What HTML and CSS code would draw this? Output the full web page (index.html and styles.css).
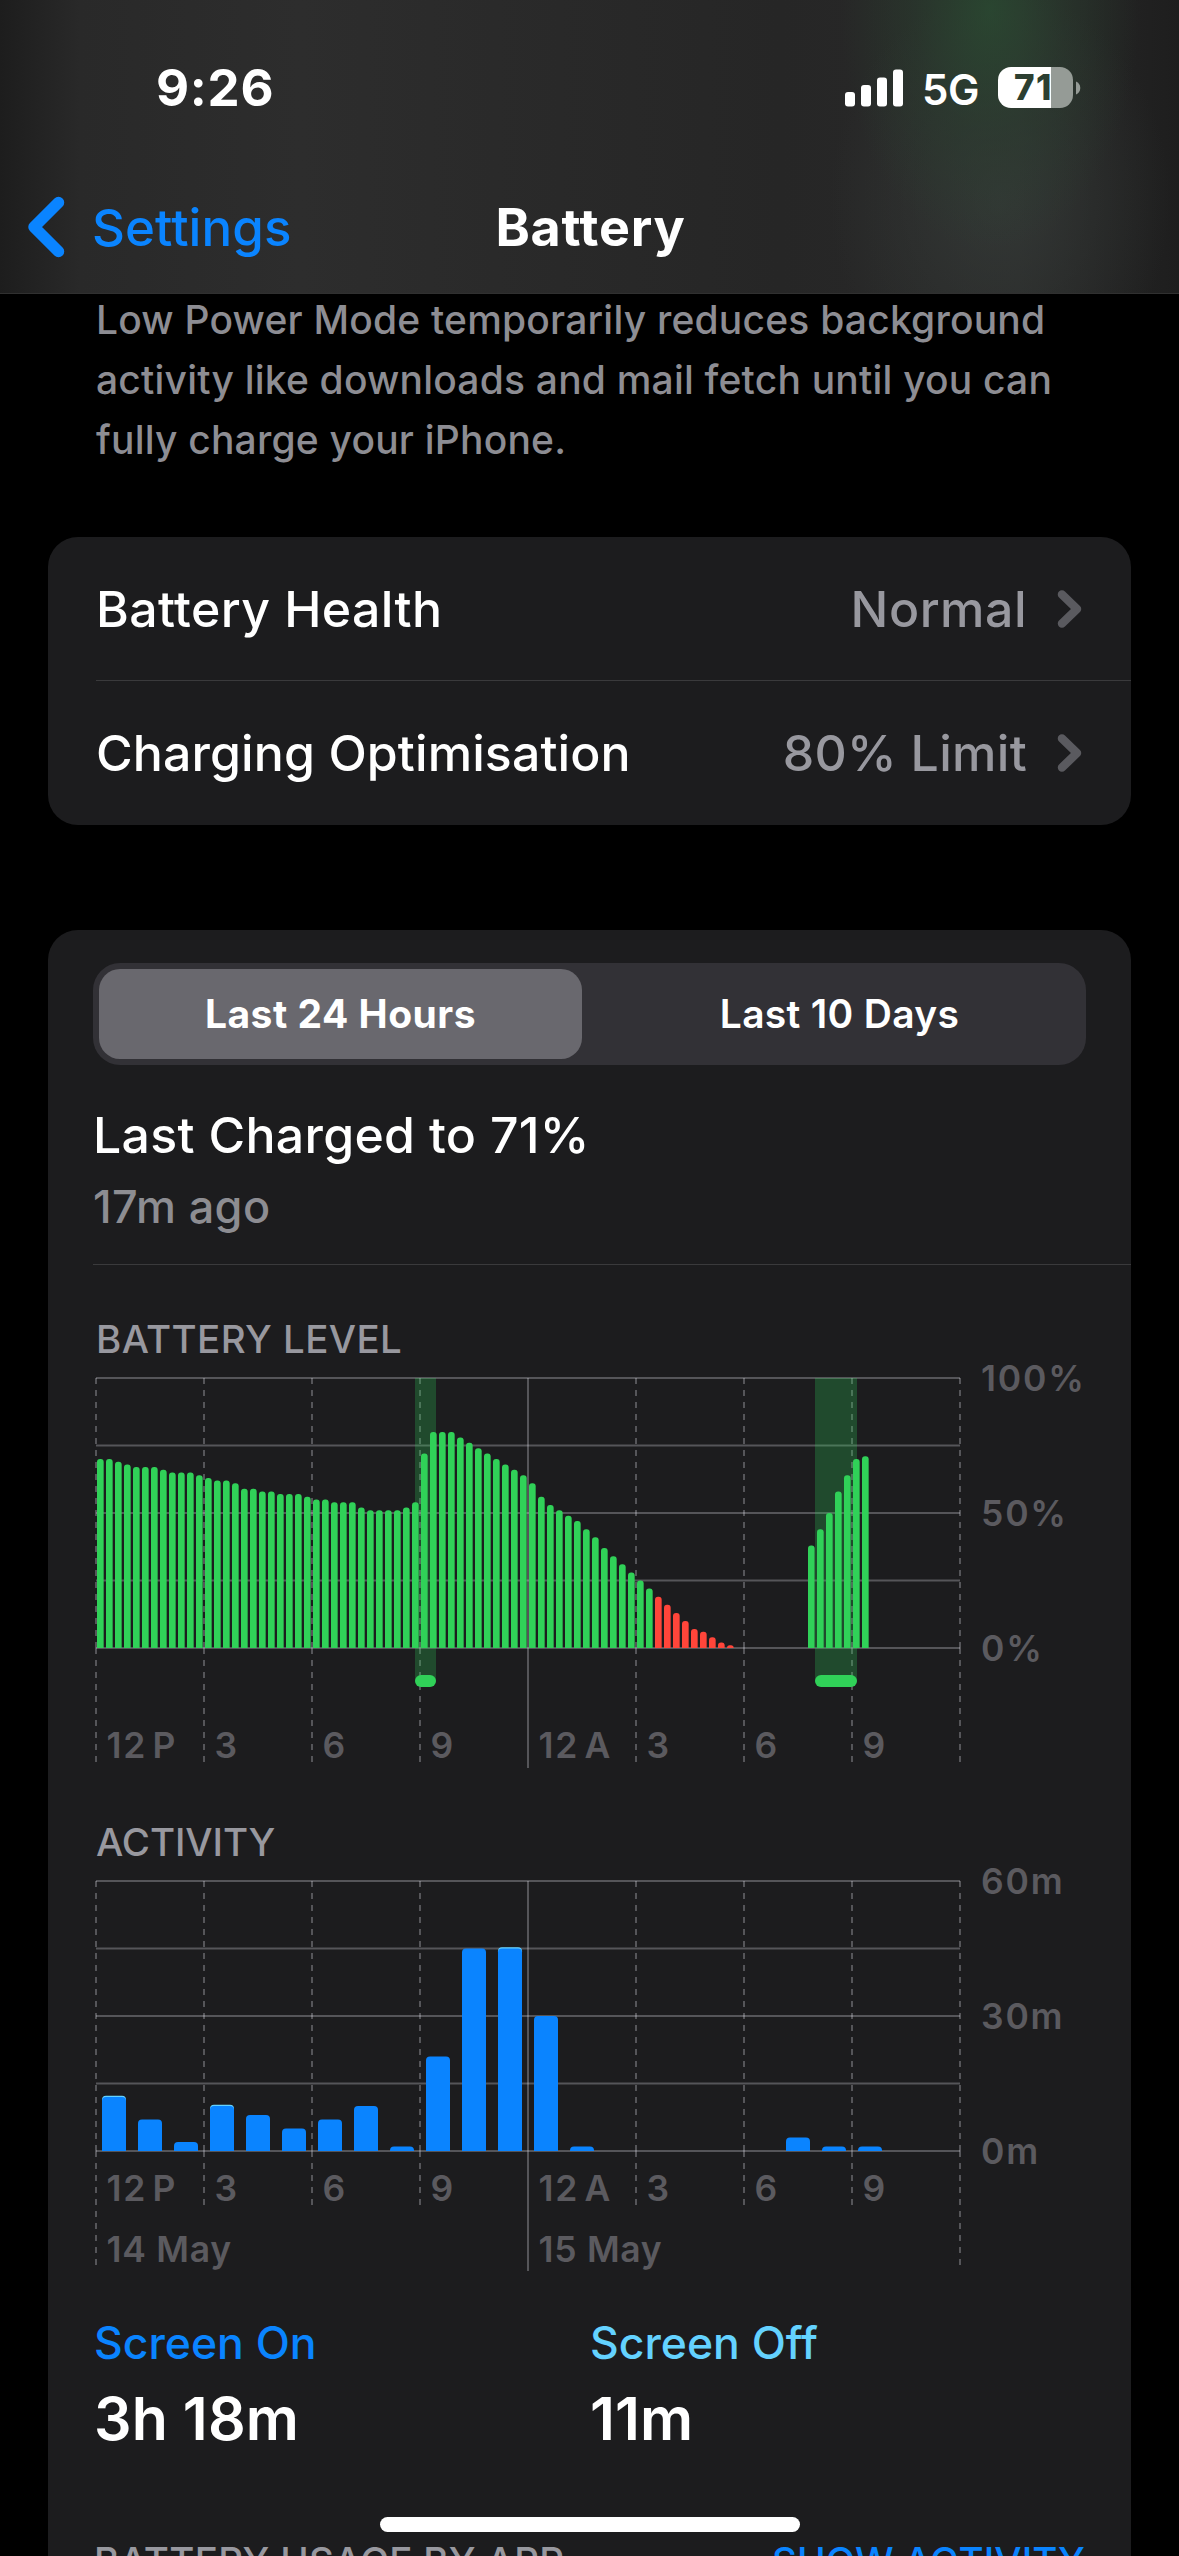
FILE: index.html
```html
<!DOCTYPE html>
<html lang="en">
<head>
  <meta charset="UTF-8" />
  <meta name="viewport" content="width=device-width, initial-scale=1" />
  <title>Battery</title>
  <link rel="stylesheet" href="styles.css">
</head>
<body>

  <header class="top">
    <div class="status-bar">
      <span class="time">9:26</span>
      <div class="status-icons">
        <svg class="signal" width="58" height="38" viewBox="0 0 58 38">
          <rect x="0" y="23" width="10" height="14.5" rx="3" />
          <rect x="16" y="16" width="10" height="21.5" rx="3" />
          <rect x="32" y="8.500" width="10" height="29" rx="3" />
          <rect x="48" y="0.500" width="10" height="37" rx="3" />
        </svg>
        <span class="network">5G</span>
        <div class="battery"><span>71</span></div>
        <svg class="nub" width="5" height="14" viewBox="0 0 5 14"><path d="M0 0.500C2.500 1.500 4.300 4 4.300 7S2.500 12.500 0 13.500Z" /></svg>
      </div>
    </div>
    <nav class="nav-bar">
      <a class="back">
        <svg width="38" height="62" viewBox="0 0 38 62"><path d="M30.500 6.500L6 31L30.500 55.500" /></svg>
        <span>Settings</span>
      </a>
      <h1>Battery</h1>
    </nav>
  </header>

  <main>
    <p class="note">Low Power Mode temporarily reduces background activity like downloads and mail fetch until you can fully charge your iPhone.</p>

    <section class="card list">
      <div class="row">
        <span class="health">Battery Health</span>
        <span class="value normal">Normal</span>
        <svg class="chevron" width="26" height="40" viewBox="0 0 26 40"><path d="M5 5.500L20 20L5 34.500" /></svg>
      </div>
      <div class="row">
        <span>Charging Optimisation</span>
        <span class="value">80% Limit</span>
        <svg class="chevron" width="26" height="40" viewBox="0 0 26 40"><path d="M5 5.500L20 20L5 34.500" /></svg>
      </div>
    </section>

    <section class="card usage">
      <div class="segmented">
        <span class="segment active">Last 24 Hours</span>
        <span class="segment">Last 10 Days</span>
      </div>

      <div class="summary">
        <h2>Last Charged to 71%</h2>
        <p>17m ago</p>
      </div>

      <h3 class="chart-title">BATTERY LEVEL</h3>
      <svg id="level" class="chart" width="1083" height="410" viewBox="0 0 1083 410"></svg>

      <h3 class="chart-title activity-title">ACTIVITY</h3>
      <svg id="activity" class="chart" width="1083" height="410" viewBox="0 0 1083 410"></svg>

      <div class="totals">
        <div class="total on">
          <h4>Screen On</h4>
          <p>3h 18m</p>
        </div>
        <div class="total off">
          <h4>Screen Off</h4>
          <p>11m</p>
        </div>
      </div>

      <div class="apps-head">
        <span>BATTERY USAGE BY APP</span>
        <a>SHOW ACTIVITY</a>
      </div>
    </section>
  </main>

  <div class="home-indicator"></div>

  <script>
    const LEFT = 48;
    const TOP = 14;
    const WIDTH = 864;
    const HEIGHT = 270;
    const BOTTOM = TOP + HEIGHT;
    const hours = ['12 P', '3', '6', '9', '12 A', '3', '6', '9'];

    // percent, one value every 15 minutes
    const levels = [
      70, 70, 69, 68, 67, 67, 67, 66, 65, 65, 65, 64,
      63, 62, 62, 61, 59, 59, 58, 58, 57, 57, 57, 56,
      55, 55, 54, 54, 54, 52, 51, 51, 51, 51, 52, 54,
      72, 80, 80, 80, 78, 76, 74, 72, 70, 68, 66, 64,
      61, 56, 53, 51, 49, 47, 44, 41, 37, 34, 31, 28,
      25, 22, 19, 16, 13, 10, 7, 6, 4, 2, 1, 0,
      0, 0, 0, 0, 0, 0, 0, 38, 44, 50, 58, 64, 70, 71
    ];
    const charging = [[367, 21], [767, 42]];

    // minutes per hour: [screen on, screen off]
    const minutes = [
      [12, 0.3], [7, 0], [2, 0], [10, 0.3], [8, 0], [5, 0], [7, 0], [10, 0],
      [1, 0], [21, 0], [45, 0], [45, 0.3], [30, 0], [1, 0], [0, 0], [0, 0],
      [0, 0], [0, 0], [0, 0], [3, 0], [1, 0], [1, 0]
    ];

    function line(x1, y1, x2, y2, cls) {
      return `<line x1="${x1}" y1="${y1}" x2="${x2}" y2="${y2}" class="${cls}" />`;
    }

    function text(x, y, str, cls) {
      return `<text x="${x}" y="${y}" class="${cls}">${str}</text>`;
    }

    // bar with only the top corners rounded
    function bar(x, y, w, r, cls) {
      r = Math.min(r, BOTTOM - y);
      return `<path class="${cls}" d="M${x} ${BOTTOM}V${y + r}Q${x} ${y} ${x + r} ${y}H${x + w - r}Q${x + w} ${y} ${x + w} ${y + r}V${BOTTOM}Z" />`;
    }

    function grid(ends, solidEnd) {
      let out = '';
      for (let i = 0; i <= 4; i++) {
        const y = TOP + i * HEIGHT / 4;
        out += line(LEFT, y, LEFT + WIDTH, y, 'grid');
      }
      for (let i = 0; i <= 8; i++) {
        const x = LEFT + i * WIDTH / 8;
        if (i === 4) {
          out += line(x, TOP, x, solidEnd, 'grid');
        } else {
          out += line(x, TOP, x, BOTTOM, 'grid dashed');
          out += line(x, BOTTOM, x, ends[i % 8 === 0 ? 0 : 1], 'grid dashed');
        }
      }
      return out;
    }

    function axis(labels, hourY) {
      let out = '';
      labels.forEach((l, i) => {
        out += text(933, TOP + i * HEIGHT / 2 + 12.7, l, 'axis');
      });
      hours.forEach((h, i) => {
        out += text(LEFT + i * WIDTH / 8 + 10.5, hourY, h, 'axis hour');
      });
      return out;
    }

    let level = grid([398, 398], 404);
    charging.forEach(c => {
      level += `<rect x="${c[0]}" y="${TOP}" width="${c[1]}" height="303" class="band" />`;
    });
    levels.forEach((v, i) => {
      if (v) level += bar(LEFT + 1 + i * 9, BOTTOM - v * HEIGHT / 100, 6.67, 3, v < 20 ? 'low' : 'ok');
    });
    charging.forEach(c => {
      level += `<rect x="${c[0]}" y="311" width="${c[1]}" height="12" rx="6" class="ok" />`;
    });
    level += axis(['100%', '50%', '0%'], 394);
    document.getElementById('level').innerHTML = level;

    let activity = grid([398, 338], 404);
    minutes.forEach((m, i) => {
      const x = LEFT + 6 + i * 36;
      const on = BOTTOM - m[0] * HEIGHT / 60;
      const all = on - m[1] * HEIGHT / 60;
      if (m[1]) activity += bar(x, all, 24, 4, 'screen-off');
      if (m[0]) activity += bar(x, on, 24, 4, 'screen-on');
    });
    activity += axis(['60m', '30m', '0m'], 334);
    activity += text(LEFT + 10.5, 395, '14 May', 'axis date');
    activity += text(LEFT + WIDTH / 2 + 10.5, 395, '15 May', 'axis date');
    document.getElementById('activity').innerHTML = activity;
  </script>
</body>
</html>
```
FILE: styles.css
```css
* {
  margin: 0;
  padding: 0;
  box-sizing: border-box;
}

body {
  height: 2556px;
  background: #000;
  color: #fff;
  overflow: hidden;
  position: relative;
  font-family: Inter, "Liberation Sans", sans-serif;
  font-size: 50px;
  font-weight: 500;
}

h1, h2, h3, h4 {
  font-weight: 500;
}

/* Status bar and navigation */
.top {
  height: 294px;
  border-bottom: 1px solid #303030;
  background:
    radial-gradient(ellipse 150px 240px at 990px 10px, rgba(42, 76, 50, 0.8), rgba(42, 66, 48, 0.45) 50%, rgba(42, 60, 48, 0) 100%),
    radial-gradient(ellipse 170px 210px at 1000px 200px, rgba(54, 60, 57, 0.75), rgba(46, 46, 46, 0) 100%),
    linear-gradient(to right, #1d1d1d, #292929 80px, #2d2d2d 300px, #292929 560px, #262626 780px, #292929 1020px, #1e1e1e);
}

.status-bar {
  height: 175px;
  padding: 0 98px 0 156px;
  display: flex;
  align-items: center;
  justify-content: space-between;
}

.time {
  font-size: 51px;
  font-weight: 700;
  letter-spacing: 0.7px;
}

.status-icons {
  display: flex;
  align-items: center;
}

.signal {
  fill: #fff;
}

.network {
  margin: 3px 0 0 19px;
  width: 76px;
  font-size: 42px;
  font-weight: 600;
  letter-spacing: -0.4px;
}

.battery {
  width: 75px;
  height: 41px;
  padding-left: 16px;
  border-radius: 13px;
  background: linear-gradient(to right, #fff 53px, #959b96 53px);
  color: #2c3f31;
  font-size: 35px;
  font-weight: 800;
  line-height: 41px;
  letter-spacing: 1.5px;
}

.nub {
  margin-left: 3px;
  fill: #959b96;
}

.nav-bar {
  height: 104px;
  padding-left: 28px;
  display: grid;
  grid-template-columns: 1fr auto 1fr;
  align-items: center;
}

.back {
  display: flex;
  align-items: center;
  gap: 26px;
  color: #0a84ff;
  font-size: 51px;
  letter-spacing: 0.1px;
}

.back svg {
  fill: none;
  stroke: #0a84ff;
  stroke-width: 11.5;
  stroke-linecap: round;
  stroke-linejoin: round;
}

.nav-bar h1 {
  margin-right: 26px;
  font-size: 52px;
  font-weight: 700;
  letter-spacing: 0.8px;
}

/* Page content */
main {
  margin-top: -4px;
  padding: 0 48px;
}

.note {
  width: 1030px;
  padding-left: 48px;
  color: #8d8d93;
  font-size: 39px;
  line-height: 60px;
  letter-spacing: 0.2px;
}

.card {
  background: #1c1c1e;
  border-radius: 30px;
}

.list {
  margin-top: 67px;
}

.row {
  height: 144px;
  margin-left: 48px;
  padding-right: 48px;
  display: flex;
  align-items: center;
  letter-spacing: 0.1px;
}

.row:first-child {
  border-bottom: 1px solid #3a3a3c;
}

.health {
  letter-spacing: 0.4px;
}

.value {
  margin-left: auto;
  margin-right: 30px;
  color: #98989f;
  letter-spacing: 0.3px;
}

.normal {
  letter-spacing: 0.5px;
}

.chevron {
  fill: none;
  stroke: #5a5a5f;
  stroke-width: 8.5;
  stroke-linecap: round;
  stroke-linejoin: round;
}

.usage {
  height: 1700px;
  margin-top: 105px;
  padding-top: 33px;
}

.segmented {
  height: 102px;
  margin: 0 45px;
  padding: 6px;
  display: grid;
  grid-template-columns: 483px 1fr;
  border-radius: 27px;
  background: #323136;
  font-size: 39px;
}

.segment {
  padding-left: 17px;
  border-radius: 21px;
  font-weight: 600;
  line-height: 90px;
  text-align: center;
  letter-spacing: 0.3px;
}

.segment.active {
  padding-left: 0;
  background: #69686e;
  font-weight: 700;
  letter-spacing: 0.5px;
}

.summary {
  margin-left: 45px;
  padding: 40px 0 30px;
  border-bottom: 1px solid #3a3a3c;
}

.summary h2 {
  font-size: 50px;
  line-height: 60px;
  letter-spacing: 0.3px;
}

.summary p {
  margin-top: 15px;
  color: #8d8d92;
  font-size: 45px;
  line-height: 54px;
  letter-spacing: 0.4px;
}

/* Charts */
.chart-title {
  padding: 49px 0 0 48px;
  color: #98989f;
  font-size: 38.5px;
  line-height: 50px;
  letter-spacing: 0.4px;
}

.activity-title {
  padding-top: 43px;
  letter-spacing: -0.1px;
}

.chart {
  display: block;
}

.grid {
  stroke: rgba(235, 235, 245, 0.28);
  stroke-width: 2;
}

.dashed {
  stroke-dasharray: 6 6;
}

.band {
  fill: rgba(48, 209, 88, 0.26);
}

.ok {
  fill: #30d158;
}

.low {
  fill: #ff453a;
}

.screen-on {
  fill: #0a84ff;
}

.screen-off {
  fill: #64d2ff;
}

.axis {
  fill: #5b5a5f;
  font-size: 35.5px;
  font-weight: 600;
  letter-spacing: 1.8px;
}

.hour {
  word-spacing: -5.5px;
}

.date {
  letter-spacing: 0.7px;
}

/* Totals */
.totals {
  margin-top: 39px;
  padding-left: 46px;
  display: grid;
  grid-template-columns: 496px 1fr;
}

.total h4 {
  font-size: 44.5px;
  line-height: 54px;
}

.on h4 {
  color: #0a84ff;
}

.off h4 {
  color: #64d2ff;
}

.total p {
  margin-top: 14px;
  font-size: 59px;
  line-height: 70px;
  font-weight: 600;
  letter-spacing: 0.1px;
}

.apps-head {
  margin-top: 82px;
  padding: 0 46px;
  display: flex;
  justify-content: space-between;
  color: #98989f;
  font-size: 38.5px;
  line-height: 50px;
  letter-spacing: 0.3px;
}

.apps-head a {
  color: #0a84ff;
  letter-spacing: 0.1px;
}

.home-indicator {
  position: absolute;
  left: 380px;
  bottom: 24px;
  width: 420px;
  height: 15px;
  border-radius: 8px;
  background: #fff;
}
```
